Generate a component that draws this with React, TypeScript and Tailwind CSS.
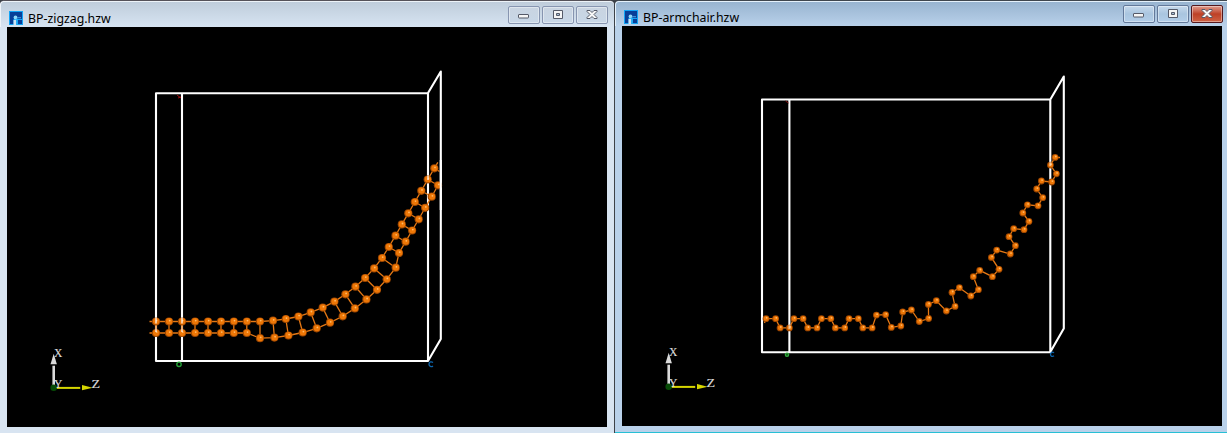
import React from 'react';

type Pt = [number, number];

const upper: Pt[] = [
  [156, 321.5], [169, 321.5], [182, 321.5], [195, 321.5], [208, 321.5], [221, 321.5], [233.8, 321.5], [246.8, 321.5],
  [260, 321.5], [273, 320.7], [285.8, 319], [298.4, 316.5], [310.7, 312.4], [322.7, 307.6], [334.4, 301.6], [345.4, 294.3],
  [355.4, 286.7], [365.1, 278], [374.1, 268.4], [382, 258], [388.8, 247], [395.5, 235.7], [401.8, 224.4], [408.3, 213.3],
  [414.8, 202], [421.3, 190.8], [427.7, 179.5], [434.3, 168.3],
];
const lower: Pt[] = [
  [156, 333], [169, 333], [182, 333], [195, 333], [208, 333], [221, 333], [233.8, 333], [246.8, 333],
  [260, 338.2], [274.4, 337.6], [288.4, 335.5], [302.7, 332.5], [316.7, 328.3], [330, 322.7], [342.7, 316.3], [354.8, 308.4],
  [366.4, 299.4], [377, 289.8], [386.7, 279.3], [395.7, 267.7], [399, 253], [405.6, 241.7], [412.1, 230.5], [418.7, 219.3],
  [425.1, 207.8], [431.7, 196.7], [438, 185.3],
];
const chain: Pt[] = [
  [766, 318.7], [775.6, 318.7], [780.1, 327.9], [789.4, 327.9], [793.9, 318.7], [803.1, 318.7], [807.7, 327.9], [817, 327.9],
  [821.4, 318.7], [830.8, 318.7], [835.3, 327.9], [844.7, 327.9], [849, 318.7], [858.3, 318.7], [862.8, 327.9], [872.1, 327.9],
  [876.4, 315.1], [885.6, 314.7], [891.3, 327.4], [900.8, 326], [902.7, 312], [911.4, 310], [919.3, 321.5], [928.6, 318.5],
  [928.4, 304.4], [936.3, 300.7], [946.3, 311], [955, 306.4], [952, 292.4], [959.4, 287.7], [970.8, 296], [978.4, 289.7],
  [973.3, 276.7], [979.7, 270.4], [992.4, 276.7], [999, 269.3], [991.4, 257.4], [996.7, 250.1], [1010.3, 254], [1015.4, 245.7],
  [1009, 236.7], [1013.7, 228.7], [1024, 229.7], [1028.9, 221.4], [1022.8, 213], [1027.4, 204.8], [1038, 205.8], [1042.7, 197.7],
  [1036.7, 189], [1041.4, 181], [1051.7, 182], [1056.4, 173.8], [1050.4, 165.1], [1055.1, 157.4],
];

const toPoints = (pts: Pt[]) => pts.map((p) => p.join(',')).join(' ');

function Atoms({ pts, r }: { pts: Pt[]; r: number }) {
  return (
    <g>
      {pts.map(([x, y], i) => (
        <g key={i}>
          <circle cx={x} cy={y} r={r} fill="#a04800" />
          <circle cx={x + 0.2} cy={y - 0.2} r={r - 0.9} fill="#ee7706" />
          <circle cx={x + 0.7} cy={y - 0.9} r={0.9} fill="#ffb865" />
        </g>
      ))}
    </g>
  );
}

function Axes({ x, y }: { x: number; y: number }) {
  return (
    <g>
      <path d={`M${x} ${y}V${y - 22}`} stroke="#dadada" strokeWidth="2.6" />
      <path d={`M${x - 3.2} ${y - 23.5}h6.4L${x} ${y - 34}z`} fill="#dadada" />
      <path d={`M${x} ${y + 0.2}h26.5`} stroke="#d6d600" strokeWidth="2" />
      <path d={`M${x + 28.3} ${y - 2.6}v5.2L${x + 39} ${y}z`} fill="#d6d600" />
      <circle cx={x} cy={y} r="3.3" fill="#064b06" />
      <g fill="#dcdcdc" stroke="#dcdcdc" strokeWidth="0.15" fontFamily='"Liberation Serif", serif' fontSize="12.5">
        <text x={x + 0.3} y={y - 31.2} textLength="8.4" lengthAdjust="spacingAndGlyphs">X</text>
        <text x={x + 0.3} y={y + 0.2} textLength="8.4" lengthAdjust="spacingAndGlyphs">Y</text>
        <text x={x + 37.7} y={y + 0.2} textLength="8.6" lengthAdjust="spacingAndGlyphs">Z</text>
      </g>
    </g>
  );
}

function ZigzagScene() {
  return (
    <svg className="block h-[400px] w-[600px] bg-black" viewBox="7 27 600 400">
      <g fill="none" stroke="#fff" strokeWidth="2.1" strokeLinejoin="round">
        <path d="M156 93.2H428V361H156zM182 93V361M428 93L440.8 71.5V339L428 361" />
      </g>
      <path d="M177 95l4 3M178 98l3-1" stroke="#a01010" strokeWidth="1" />
      <g fill="none" stroke="#e57814" strokeWidth="1.3">
        <polyline points={`149.5,321.5 ${toPoints(upper)} 437.8,162.3`} />
        <polyline points={`149.5,333 ${toPoints(lower)}`} />
        {lower.map(([x, y], i) => (
          <line key={i} x1={x} y1={y} x2={upper[i][0]} y2={upper[i][1]} />
        ))}
        <path d="M434.3 168.3L439.5 171.5" />
      </g>
      <Atoms pts={upper} r={4.1} />
      <Atoms pts={lower} r={4.1} />
      <path d="M156 317.5v6M156 329v3M182 317.5v6M182 329v3M428 176v4" stroke="#fff" strokeWidth="2" opacity="0.6" />
      <path d="M440.8 160V210" stroke="#fff" strokeWidth="2.1" />
      <circle cx="179" cy="364.3" r="2.2" fill="none" stroke="#25a338" strokeWidth="1.4" />
      <path d="M433 362.5c-1.5-1.3-4-.8-4 1.7s2.5 3 4 1.7" fill="none" stroke="#0d66ae" strokeWidth="1.3" />
      <Axes x={53.7} y={387.7} />
    </svg>
  );
}

function ArmchairScene() {
  return (
    <svg className="block h-[400px] w-[600px] bg-black" viewBox="622 26 600 400">
      <g fill="none" stroke="#fff" strokeWidth="2.1" strokeLinejoin="round">
        <path d="M762 99.5H1050.3V352.2H762zM789.4 99.5V352M1050.3 99.5L1063.8 76.5V328.5L1050.3 352" />
      </g>
      <path d="M785.5 101l3 2" stroke="#801010" strokeWidth="1" />
      <polyline points={`764.5,323 ${toPoints(chain)} 1060,157.5`} fill="none" stroke="#e57814" strokeWidth="1.3" />
      <Atoms pts={chain} r={3.4} />
      <path d="M789.4 324v5M1050.3 162v4" stroke="#fff" strokeWidth="2" opacity="0.5" />
      <circle cx="787" cy="354.7" r="1.7" fill="#145f1d" stroke="#32ad3e" strokeWidth="1.2" />
      <path d="M1054 352.8c-1.5-1.2-3.5-.7-3.5 1.5s2 2.7 3.5 1.5" fill="none" stroke="#0d66ae" strokeWidth="1.3" />
      <Axes x={668.7} y={386.7} />
    </svg>
  );
}

function AppIcon() {
  return (
    <svg className="mt-[9px] h-[14px] w-[14px] shrink-0" viewBox="0 0 14 14">
      <path d="M0 0h14v14H0z" fill="#12a4f6" />
      <path d="M1 1h12v7H1z" fill="#083f98" />
      <path d="M1 8h3.500v5H1z" fill="#083f98" />
      <path d="M9 9h4v4H9z" fill="#083f98" />
      <circle cx="6.500" cy="6.500" r="1.900" fill="#8fd8f8" />
      <path d="M8 6h4v1.300H8z" fill="#3c8fd6" />
      <path d="M7 7.500h1.500V14H7z" fill="#2cb0f7" />
      <path d="M4.500 9H7v5H4.500z" fill="#d0e4f4" />
    </svg>
  );
}

function Controls({ active }: { active: boolean }) {
  const frame = active
    ? 'border-[#63799a] bg-linear-to-b from-[#c5d9ec] via-[#a9c5df] to-[#b3cee9]'
    : 'border-[#8795b0] bg-linear-to-b from-[#c9d4e1] to-[#c8d7e7]';
  const close = active
    ? 'border-[#54171c] bg-linear-to-b from-[#df9b8d] via-[#bd4026] to-[#cf6244]'
    : frame;
  const base = 'flex h-[18px] w-8 items-center justify-center rounded-[2px] border shadow-[inset_0_0_0_1px_#ffffff66]';
  return (
    <div className="mt-[4px] flex gap-[2px]">
      <div className={`${base} ${frame}`}>
        <svg className="h-3 w-3" viewBox="0 0 12 12"><rect x="0.5" y="5.5" width="10" height="3.5" rx=".5" fill="#f5f5f5" stroke="#555a68" /></svg>
      </div>
      <div className={`${base} ${frame}`}>
        <svg className="h-3 w-3" viewBox="0 0 12 12"><path d="M1.5 1.5h9v8h-9z" fill="#f5f5f5" stroke="#555a68" /><path d="M4.5 4.5h3v2h-3z" fill="#a9bfd5" stroke="#555a68" /></svg>
      </div>
      <div className={`${base} ${close}`}>
        <svg className="h-3 w-3" viewBox="0 0 12 12"><path d="M1 1.5h3l2 2 2-2h3v1L8 5.5l3 3v1H8l-2-2-2 2H1v-1l3-3-3-3z" fill="#f8f8f8" stroke="#555a68" /></svg>
      </div>
    </div>
  );
}

export default function App() {
  return (
    <div className="flex h-[433px] w-[1227px] overflow-hidden bg-[#3d4148] font-['Noto_Sans',sans-serif] text-xs text-black">
      <section className="h-[433px] w-[614px] rounded-tl-[5px] rounded-tr-[5px] border-t border-[#555259] bg-[#d8e4f1] pl-[7px]">
        <header className="-ml-[7px] flex h-[26px] items-start justify-between rounded-t-[4px] border-t border-l border-[#edf3f8] bg-linear-to-b from-[#bfcddb] to-[#d7e4f2] pr-[6px] pl-[8px]">
          <div className="flex gap-[5px]">
            <AppIcon />
            <h1 className="mt-[8px] text-[12px] leading-[18px] whitespace-nowrap"><span className="inline-block origin-left scale-x-[1.027]">BP-zigzag.hzw</span></h1>
          </div>
          <Controls active={false} />
        </header>
        <ZigzagScene />
      </section>
      <section className="ml-px h-[433px] w-[612px] rounded-tl-[5px] border-t border-b border-t-[#3f464e] border-b-[#27bfd5] bg-[#b9d1ea] pl-[7px]">
        <header className="-ml-[7px] flex h-[25px] items-start justify-between rounded-tl-[4px] border-t border-l border-[#e5f1fb] bg-linear-to-b from-[#98b4d0] to-[#b9d1ea] pr-[4px] pl-[8px]">
          <div className="-mt-[1px] flex gap-[5px]">
            <AppIcon />
            <h1 className="mt-[8px] text-[12px] leading-[18px] whitespace-nowrap"><span className="inline-block origin-left scale-x-[1.027]">BP-armchair.hzw</span></h1>
          </div>
          <div className="-mt-[1px]"><Controls active /></div>
        </header>
        <ArmchairScene />
      </section>
    </div>
  );
}
